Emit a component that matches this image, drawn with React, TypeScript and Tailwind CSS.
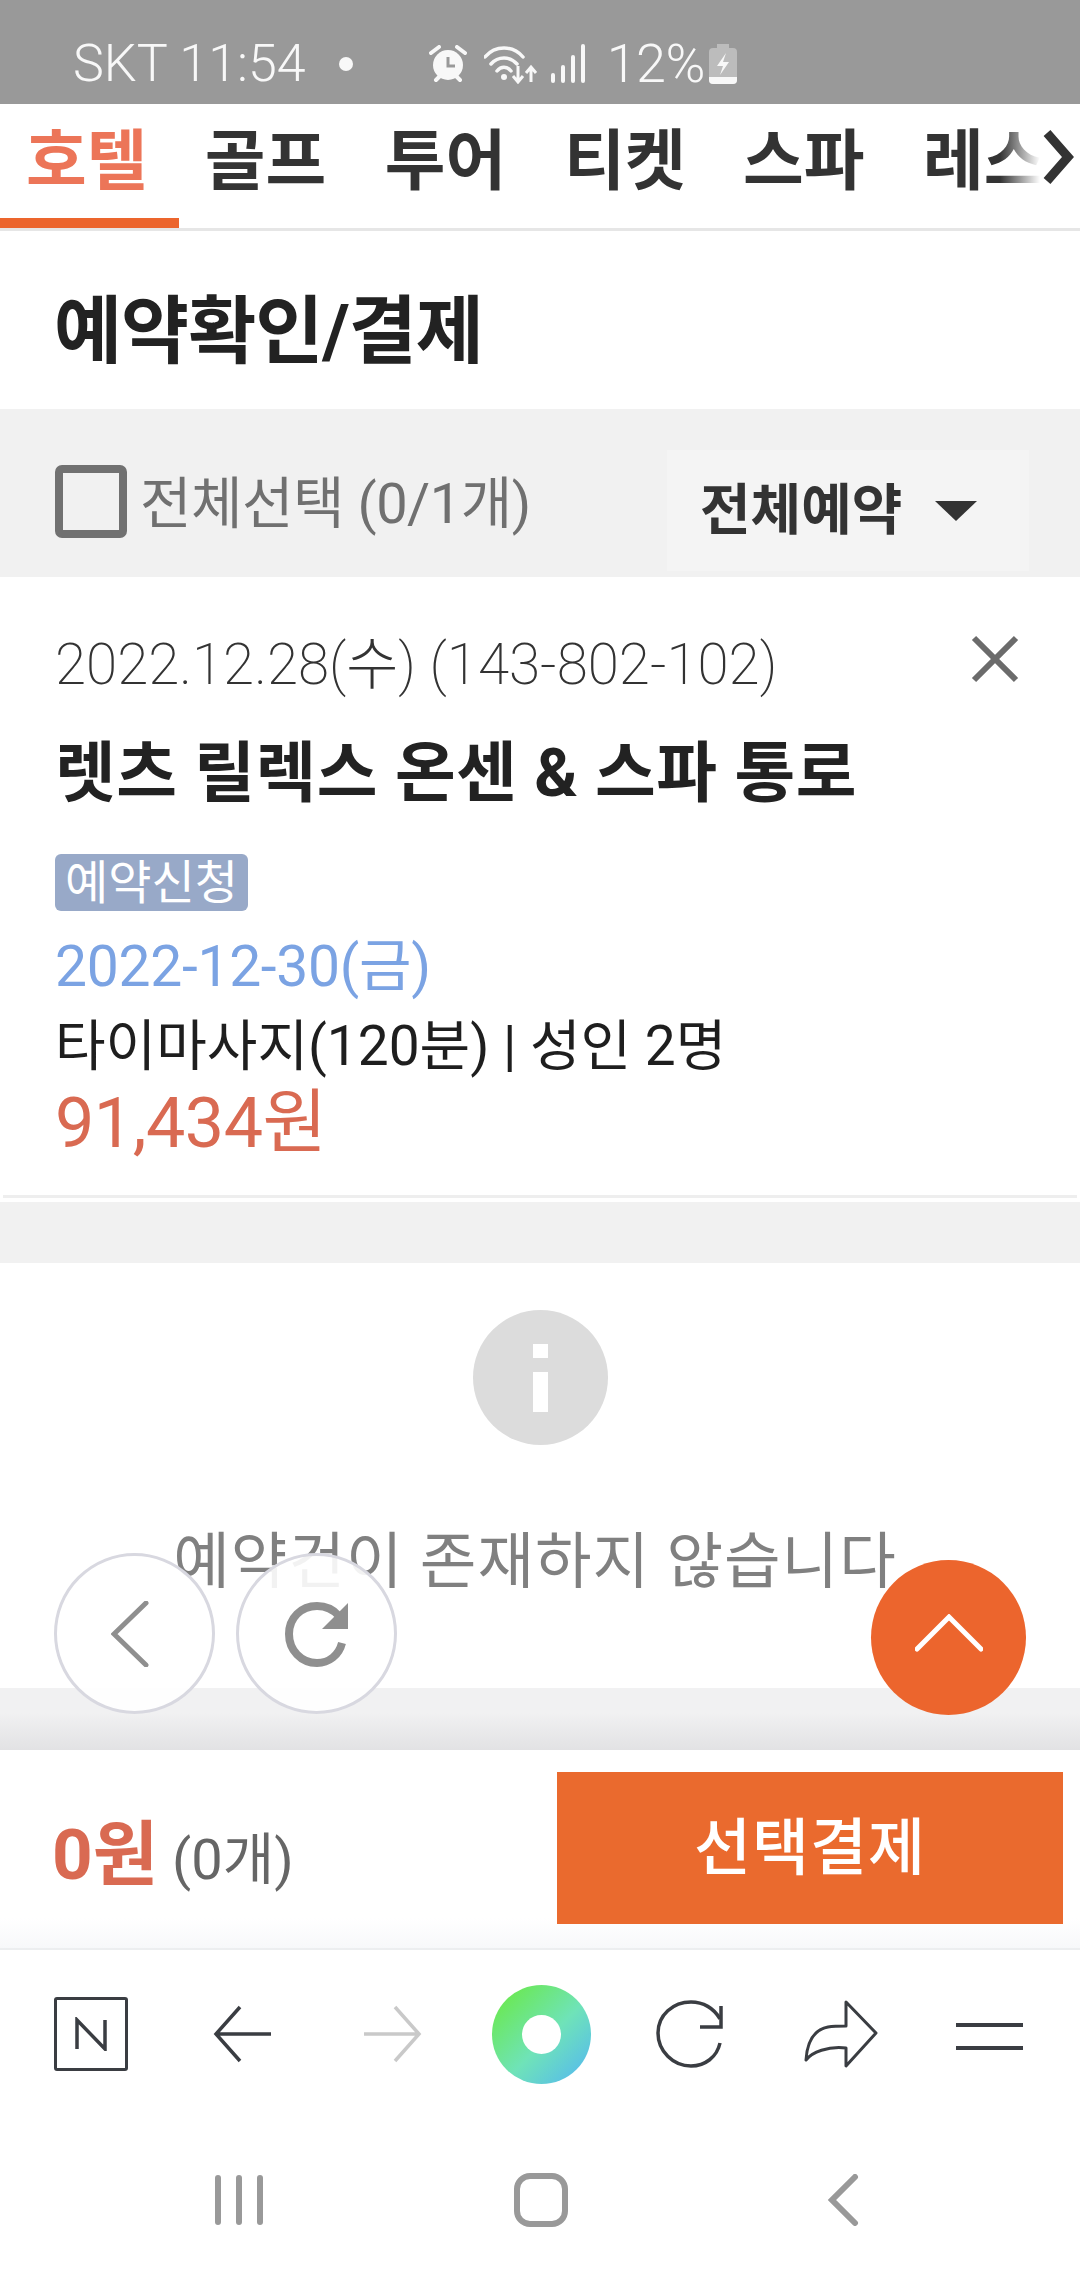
import React from "react";

const tabs = [
  { label: "호텔", offset: "pr-[5px]" },
  { label: "골프", offset: "pr-[5px]" },
  { label: "투어", offset: "pr-[2px]" },
  { label: "티켓", offset: "" },
  { label: "스파", offset: "" },
  { label: "레스", offset: "pl-[3px]" },
];

const StatusIcons = () => (
  <div className="flex items-center">
    <svg width="38" height="38" viewBox="0 0 38 38" className="ml-[76px]">
      <circle cx="19" cy="20" r="15" fill="#f8f8f8" />
      <path d="M19 12v9h7" fill="none" stroke="#999" strokeWidth="3" />
      <path d="M2 8l8-6M36 8l-8-6M7 35l4-4M31 35l-4-4" stroke="#f8f8f8" strokeWidth="4" strokeLinecap="round" />
    </svg>
    <svg width="54" height="40" viewBox="0 0 54 40" className="ml-[17px]">
      <path d="M1 13C11 1 29 1 39 13M7 20c7-8 19-8 26 0M13 27c4-5 10-5 14 0" fill="none" stroke="#f8f8f8" strokeWidth="3.5" strokeLinecap="round" />
      <circle cx="20" cy="33" r="3" fill="#f8f8f8" />
      <path d="M34 22v15M29 32l5 6 5-6M47 38V24M42 29l5-6 5 6" fill="none" stroke="#f8f8f8" strokeWidth="3" />
    </svg>
    <svg width="34" height="40" viewBox="0 0 34 40" className="ml-[13px]">
      <rect x="0" y="29" width="4" height="10" rx="2" fill="#f8f8f8" />
      <rect x="10" y="21" width="4" height="18" rx="2" fill="#f8f8f8" />
      <rect x="20" y="11" width="4" height="28" rx="2" fill="#f8f8f8" />
      <rect x="30" y="0" width="4" height="39" rx="2" fill="#f8f8f8" />
    </svg>
    <span className="ml-[22px] text-[54px] leading-none font-light tracking-[-0.5px] text-[#f8f8f8]">12%</span>
    <svg width="28" height="40" viewBox="0 0 28 40" className="ml-[4px]">
      <path d="M8 0h12v4h4a4 4 0 0 1 4 4v28a4 4 0 0 1-4 4H4a4 4 0 0 1-4-4V8a4 4 0 0 1 4-4h4z" fill="#bcbcbc" />
      <path d="M0 33h28v3a4 4 0 0 1-4 4H4a4 4 0 0 1-4-4z" fill="#f8f8f8" />
      <path d="M17 9l-9 13h6l-3 9 9-13h-6z" fill="#f8f8f8" />
    </svg>
  </div>
);

export default function App() {
  return (
    <div className="relative w-[1080px] h-[2280px] overflow-hidden bg-white [font-family:Roboto,'Noto_Sans_CJK_KR',sans-serif]">
      {/* status bar */}
      <div className="flex h-[104px] items-center bg-[#999999] pl-[73px] pt-[23px]">
        <span className="text-[52px] leading-none font-light text-[#f8f8f8]">SKT 11:54</span>
        <span className="ml-[33px] h-[14px] w-[14px] rounded-full bg-[#f8f8f8]" />
        <StatusIcons />
      </div>

      {/* tabs */}
      <div className="relative flex h-[124px] overflow-hidden">
        {tabs.map((t, i) => (
          <div
            key={t.label}
            className={`flex h-full w-[178.6px] shrink-0 justify-center pt-[21px] ${t.offset} ${i === 0 ? "border-b-[10px] border-[#ec652d] text-[#ec7558]" : "text-[#333333]"}`}
          >
            <span className="text-[66px] leading-[74px] font-bold whitespace-nowrap">{t.label}</span>
          </div>
        ))}
        <div className="absolute right-0 top-0 h-full w-[80px] bg-gradient-to-r from-white/0 to-white to-50%" />
        <svg width="32" height="54" viewBox="0 0 32 54" className="absolute left-[1042px] top-[26px]">
          <path d="M5 3l21 24L5 51" fill="none" stroke="#333" strokeWidth="9" />
        </svg>
      </div>
      <div className="h-[3px] bg-[#e6e6e6]" />

      {/* title */}
      <div className="flex h-[178px] items-start pl-[54px] pt-[59px]">
        <h1 className="text-[74px] leading-[84px] font-bold tracking-[-1px] text-[#222222]">예약확인/결제</h1>
      </div>

      {/* filter row */}
      <div className="flex h-[168px] items-start bg-[#f1f1f1] pl-[55px]">
        <div className="mt-[56px] h-[73px] w-[72px] rounded-[7px] border-[8px] border-[#717171]" />
        <span className="ml-[13px] mt-[67px] w-[527px] text-[56px] leading-none tracking-[-0.5px] whitespace-nowrap text-[#707070]">전체선택 (0/1개)</span>
        <div className="mt-[41px] flex h-[121px] w-[362px] items-center bg-[#f4f4f4] pl-[33px]">
          <span className="text-[55px] leading-none font-bold text-[#333333]">전체예약</span>
          <span className="ml-[33px] h-0 w-0 border-x-[21px] border-t-[20px] border-x-transparent border-t-[#333333]" />
        </div>
      </div>

      {/* reservation card */}
      <div className="relative h-[625px] bg-white">
        <div className="flex flex-col items-start pl-[55px]">
          <p className="mt-[56px] text-[56.5px] leading-[64px] font-extralight whitespace-nowrap text-[#333333]">2022.12.28(수) (143-802-102)</p>
          <p className="mt-[41px] text-[66px] leading-[72px] font-bold tracking-[0.5px] whitespace-nowrap text-[#222222]">렛츠 릴렉스 온센 &amp; 스파 통로</p>
          <span className="mt-[44px] flex h-[57px] w-[193px] items-center justify-center rounded-[6px] bg-[#98a9c8] text-[47px] leading-none text-white">예약신청</span>
          <p className="mt-[21px] text-[57px] leading-[70px] tracking-[-0.3px] whitespace-nowrap text-[#7ba3e3]">2022-12-30(금)</p>
          <p className="mt-[9px] text-[55px] leading-[70px] whitespace-nowrap text-[#1e1e1e]">타이마사지(120분) | 성인 2명</p>
          <p className="mt-[1px] text-[70px] leading-[82px] tracking-[-0.5px] whitespace-nowrap text-[#d96a52]">91,434원</p>
        </div>
        <svg width="48" height="48" viewBox="0 0 48 48" className="absolute left-[971px] top-[58px]">
          <path d="M3 3l42 42M45 3L3 45" stroke="#6b6b6b" strokeWidth="6" />
        </svg>
        <div className="absolute bottom-[4px] left-[3px] right-[3px] h-[3px] bg-[#eeeeee]" />
      </div>
      <div className="h-[61px] bg-[#f1f1f1]" />

      {/* empty state */}
      <div className="flex h-[425px] flex-col items-center bg-white pt-[47px]">
        <div className="flex h-[135px] w-[135px] flex-col items-center rounded-full bg-[#dcdcdc] pt-[34px]">
          <div className="h-[14px] w-[15px] bg-white" />
          <div className="mt-[14px] h-[40px] w-[15px] bg-white" />
        </div>
        <p className="mr-[10px] mt-[82px] text-[61.5px] leading-[70px] tracking-[1px] whitespace-nowrap text-[#808080]">예약건이 존재하지 않습니다</p>
      </div>
      <div className="h-[62px] bg-gradient-to-b from-[#f1f1f2] from-40% to-[#e2e2e4]" />

      {/* total bar */}
      <div className="flex h-[200px] items-start border-b-[2px] border-[#eceef0] bg-gradient-to-b from-white from-85% to-[#f7f8fa] pl-[52px] pt-[22px]">
        <div className="flex w-[505px] items-baseline pt-[43px]">
          <span className="text-[71px] leading-[80px] font-bold text-[#d96a52]">0원</span>
          <span className="ml-[14px] text-[56px] leading-none text-[#666666]">(0개)</span>
        </div>
        <button className="h-[152px] w-[506px] bg-[#ea6a2e] text-[62px] font-medium tracking-[1px] text-white">선택결제</button>
      </div>

      {/* browser toolbar */}
      <div className="flex h-[170px] items-start bg-white pl-[54px] pt-[35px]">
        <div className="mt-[12px] flex h-[74px] w-[74px] items-center justify-center rounded-[3px] border-[3px] border-[#3a3d42]">
          <svg width="34" height="34" viewBox="0 0 34 34">
            <path d="M3 32V3l28 29V3" fill="none" stroke="#3a3d42" strokeWidth="3.5" />
          </svg>
        </div>
        <svg width="60" height="60" viewBox="0 0 60 60" className="ml-[85px] mt-[20px]">
          <path d="M58 29H3M27 2L3 29l24 27" fill="none" stroke="#3a3d42" strokeWidth="3.5" />
        </svg>
        <svg width="60" height="60" viewBox="0 0 60 60" className="ml-[89px] mt-[20px]">
          <path d="M2 29h55M33 2l24 27-24 27" fill="none" stroke="#c9c9c9" strokeWidth="3.5" />
        </svg>
        <div className="ml-[70px] flex h-[99px] w-[99px] items-center justify-center rounded-full bg-[linear-gradient(135deg,#6be85c_15%,#6fe3b8_55%,#58bfe8_90%)]">
          <div className="h-[39px] w-[39px] rounded-full bg-white" />
        </div>
        <svg width="68" height="68" viewBox="0 0 68 68" className="ml-[64px] mt-[15px]">
          <path d="M65 43C62 57 50 66 36 66 18 66 3 51 3 33S18 2 36 2c12 0 23 6 29 17" fill="none" stroke="#3a3d42" strokeWidth="3.5" />
          <path d="M66 6v21H45" fill="none" stroke="#3a3d42" strokeWidth="3.5" />
        </svg>
        <svg width="74" height="68" viewBox="0 0 74 68" className="ml-[81px] mt-[15px]">
          <path d="M42 2l30 31-30 33V48C24 46 8 52 2 60c1-16 7-30 22-33 6-1 12-1 18-1z" fill="none" stroke="#3a3d42" strokeWidth="3" strokeLinejoin="round" />
        </svg>
        <div className="ml-[78px] mt-[38px] flex w-[67px] flex-col gap-[19px]">
          <div className="h-[4px] bg-[#3a3d42]" />
          <div className="h-[4px] bg-[#3a3d42]" />
        </div>
      </div>

      {/* android nav */}
      <div className="flex h-[160px] items-start bg-white pt-[53px]">
        <div className="ml-[215px] mt-[2px] flex h-[50px] gap-[15px]">
          <div className="h-full w-[6px] rounded-full bg-[#999999]" />
          <div className="h-full w-[6px] rounded-full bg-[#999999]" />
          <div className="h-full w-[6px] rounded-full bg-[#999999]" />
        </div>
        <div className="ml-[251px] h-[54px] w-[54px] rounded-[16px] border-[6px] border-[#999999]" />
        <svg width="32" height="52" viewBox="0 0 32 52" className="ml-[259px] mt-[1px]">
          <path d="M28 3L5 26l23 23" fill="none" stroke="#999" strokeWidth="6" strokeLinecap="round" />
        </svg>
      </div>

      {/* floating buttons */}
      <button className="absolute left-[54px] top-[1553px] flex h-[161px] w-[161px] items-center justify-center rounded-full border-[3px] border-[#d8d8e0] bg-white/90">
        <svg width="38" height="66" viewBox="0 0 38 66" className="mr-[10px]">
          <path d="M35 2L3 33l32 31" fill="none" stroke="#8f8f8f" strokeWidth="5" strokeLinecap="round" />
        </svg>
      </button>
      <button className="absolute left-[236px] top-[1553px] flex h-[161px] w-[161px] items-center justify-center rounded-full border-[3px] border-[#d8d8e0] bg-white/90">
        <svg width="66" height="66" viewBox="0 0 66 66">
          <path d="M58 42C55 54 45 62 33 62 17 62 5 49 5 33S17 5 33 5c9 0 16 3 22 10" fill="none" stroke="#8f8f8f" strokeWidth="8" />
          <path d="M64 2v26H38z" fill="#8f8f8f" />
        </svg>
      </button>
      <button className="absolute left-[871px] top-[1560px] flex h-[155px] w-[155px] items-center justify-center rounded-full bg-[#ec652d]">
        <svg width="68" height="38" viewBox="0 0 68 38" className="mb-[10px]">
          <path d="M2 35L34 3l32 32" fill="none" stroke="#fff" strokeWidth="5" strokeLinecap="round" />
        </svg>
      </button>
    </div>
  );
}
